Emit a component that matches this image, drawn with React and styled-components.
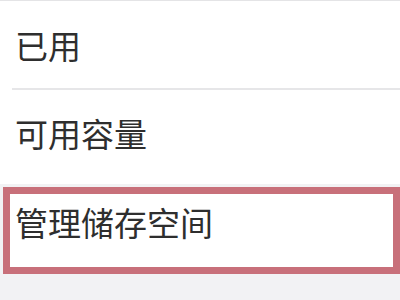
import React from "react";
import styled, { createGlobalStyle } from "styled-components";

const GlobalStyle = createGlobalStyle`
  html, body {
    margin: 0;
    padding: 0;
    background: #f2f2f4;
  }
  body {
    font-family: "Noto Sans CJK SC", "Noto Sans", sans-serif;
  }
`;

const Page = styled.div`
  width: 400px;
  height: 300px;
  overflow: hidden;
  background: #f2f2f4;
`;

const Group = styled.div`
  background: #fff;
  border-top: 1px solid #e4e4e6;
  padding-bottom: 8px;
`;

const Row = styled.div`
  position: relative;
  height: ${(p) => p.$height || 89}px;
  display: flex;
  align-items: center;
  padding-left: 15px;
  font-size: 33px;
  line-height: 33px;
  color: #2e2e2e;

  ${(p) =>
    p.$divider &&
    `
    &::after {
      content: "";
      position: absolute;
      left: 12px;
      right: 0;
      bottom: 0;
      height: 2px;
      background: #e6e6e8;
    }
  `}
`;

const Highlight = styled.div`
  margin: 3px 0 0 3px;
  height: 73px;
  border: 7px solid #c8707a;
  background: #fff;
  box-sizing: content-box;
`;

const HighlightLabel = styled.div`
  padding: 12px 0 0 5px;
  font-size: 33px;
  line-height: 33px;
  color: #2e2e2e;
`;

export default function App() {
  return (
    <>
      <GlobalStyle />
      <Page>
        <Group>
          <Row $divider>已用</Row>
          <Row $height={86}>可用容量</Row>
        </Group>
        <Highlight>
          <HighlightLabel>管理储存空间</HighlightLabel>
        </Highlight>
      </Page>
    </>
  );
}
